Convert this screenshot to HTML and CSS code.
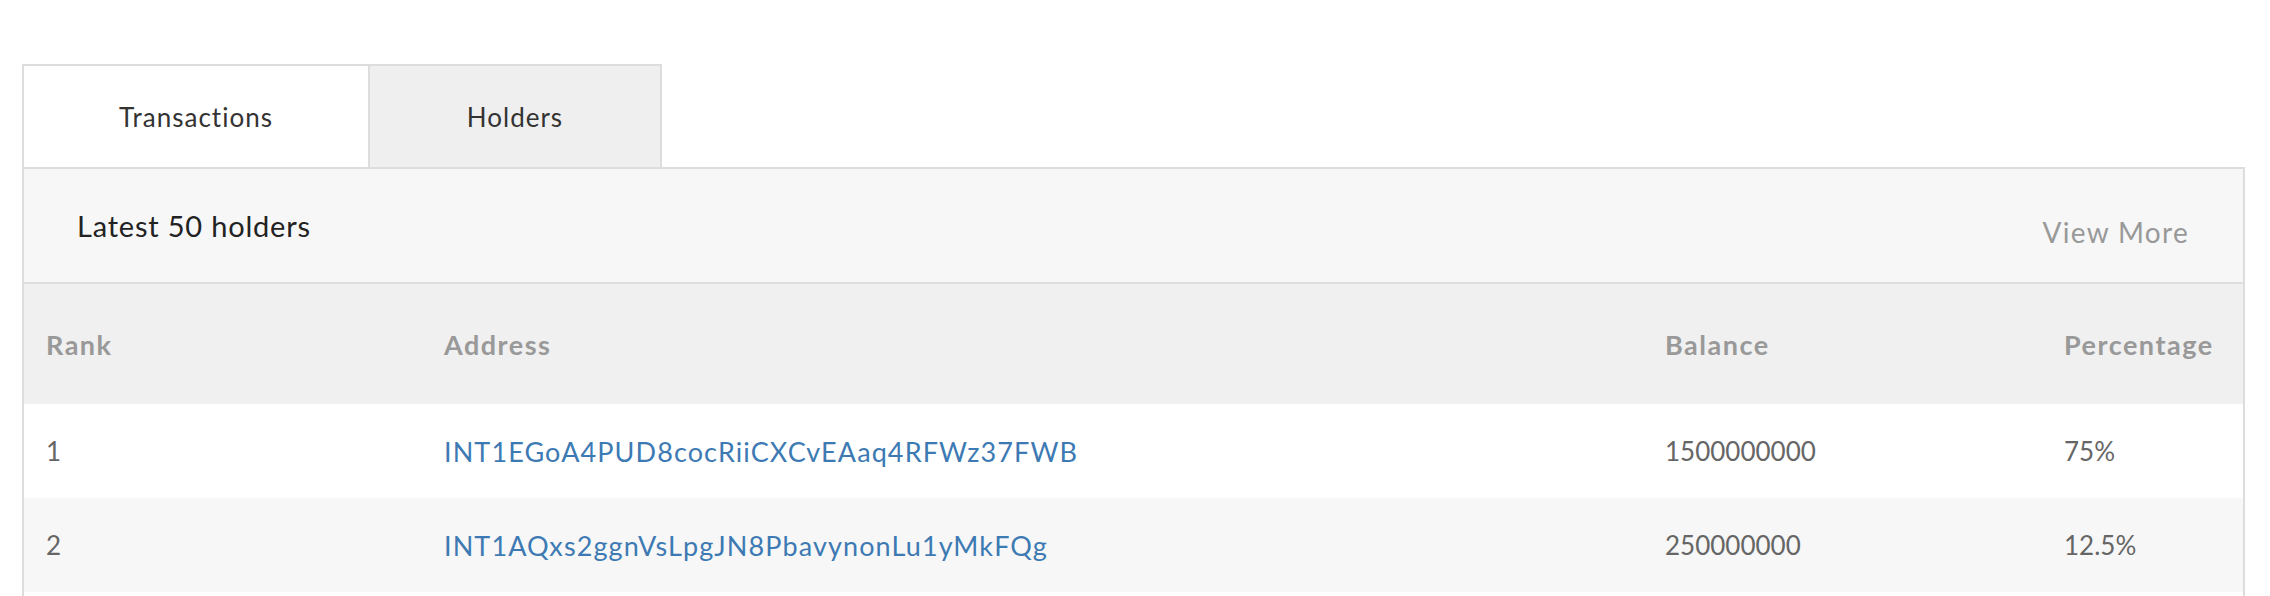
FILE: index.html
```html
<!DOCTYPE html>
<html lang="en">
<head>
<meta charset="utf-8">
<title>Holders</title>
<link rel="stylesheet" href="styles.css">
</head>
<body>
<div class="page">
  <ul class="tabs">
    <li class="tab tab-active">Transactions</li>
    <li class="tab tab-idle">Holders</li>
  </ul>
  <div class="panel">
    <div class="panel-head">
      <h3 class="panel-title">Latest 50 holders</h3>
      <a class="view-more" href="#">View More</a>
    </div>
    <div class="table">
      <div class="row row-head">
        <div class="cell">Rank</div>
        <div class="cell">Address</div>
        <div class="cell">Balance</div>
        <div class="cell">Percentage</div>
      </div>
      <div class="row">
        <div class="cell">1</div>
        <div class="cell"><a class="addr" href="#">INT1EGoA4PUD8cocRiiCXCvEAaq4RFWz37FWB</a></div>
        <div class="cell">1500000000</div>
        <div class="cell">75%</div>
      </div>
      <div class="row row-alt">
        <div class="cell">2</div>
        <div class="cell"><a class="addr" href="#">INT1AQxs2ggnVsLpgJN8PbavynonLu1yMkFQg</a></div>
        <div class="cell">250000000</div>
        <div class="cell">12.5%</div>
      </div>
    </div>
  </div>
</div>
</body>
</html>
```
FILE: styles.css
```css
* { box-sizing: border-box; }
html, body { margin: 0; padding: 0; background: #fff; }
body {
  font-family: Lato, "Open Sans", "Liberation Sans", sans-serif;
  color: #333;
}
.page {
  padding: 64px 25px 0 22px;
}
.tabs {
  list-style: none;
  margin: 0;
  padding: 0;
  display: flex;
}
.tab {
  height: 103px;
  display: flex;
  align-items: center;
  justify-content: center;
  font-size: 26px;
  letter-spacing: 1px;
  color: #333;
  border-top: 2px solid #ddd;
  border-right: 2px solid #ddd;
}
.tab-active {
  width: 348px;
  background: #fff;
  border-left: 2px solid #ddd;
}
.tab-idle {
  width: 292px;
  background: #efefef;
}
.panel {
  border: 2px solid #ddd;
  padding-bottom: 40px;
}
.panel-head {
  height: 115px;
  background: #f7f7f7;
  border-bottom: 2px solid #ddd;
  display: flex;
  align-items: center;
  justify-content: space-between;
  padding: 0 54px 0 53px;
}
.panel-title {
  margin: 0;
  font-size: 29px;
  font-weight: 400;
  letter-spacing: 0.8px;
  color: #222;
}
.view-more {
  font-size: 28px;
  letter-spacing: 1.3px;
  color: #999;
  text-decoration: none;
  padding-top: 12px;
}
.row {
  display: grid;
  grid-template-columns: 398px 1221px 399px 1fr;
  height: 94px;
  align-items: center;
  font-size: 26px;
  color: #666;
}
.row-head {
  height: 120px;
  background: #f0f0f0;
  color: #999;
  font-weight: 700;
  font-size: 27px;
  letter-spacing: 1.5px;
}
.row-alt { background: #f7f7f7; }
.cell { padding: 0 22px; white-space: nowrap; }
.addr {
  color: #3d7ab3;
  text-decoration: none;
  font-size: 27px;
  letter-spacing: 1.1px;
}
```
